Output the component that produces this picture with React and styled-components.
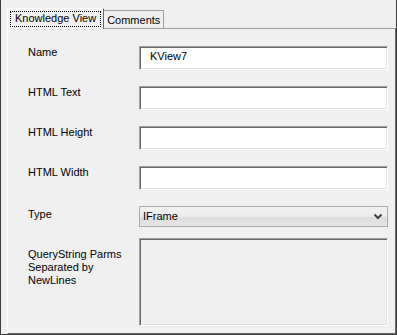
import React from "react";
import styled, { createGlobalStyle } from "styled-components";

const Global = createGlobalStyle`
  html, body { margin: 0; padding: 0; background: #f0f0f0; }
  * { box-sizing: border-box; }
  body { font-family: "Liberation Sans", Arial, sans-serif; font-size: 11px; color: #000; }
`;

const Window = styled.div`
  width: 397px;
  height: 335px;
  background: #f0f0f0;
  border-left: 1px solid #3c3c3c;
  border-right: 1px solid #3c3c3c;
  border-bottom: 1px solid #3c3c3c;
  display: flex;
  flex-direction: column;
`;

const TabStrip = styled.div`
  height: 28px;
  padding-left: 6px;
  display: flex;
  align-items: flex-end;
  flex-shrink: 0;
`;

const Tab = styled.div`
  position: relative;
  z-index: ${(p) => (p.$active ? 2 : 1)};
  background: #f0f0f0;
  line-height: 13px;
  white-space: nowrap;
  ${(p) =>
    p.$active
      ? `
    height: 21px;
    margin-bottom: -1px;
    padding: 2px 2px 0 2px;
    border-left: 1px solid #ffffff;
    border-top: 1px solid #ffffff;
    border-right: 1px solid #696969;
  `
      : `
    height: 18px;
    padding: 3px 3px 0 3px;
    border: 1px solid #a0a0a0;
    border-bottom: none;
    border-left: none;
  `}
`;

const Focus = styled.span`
  display: block;
  height: 16px;
  padding: 0 4px;
  border: 1px dotted #000;
  line-height: 13px;
`;

const Panel = styled.div`
  flex: 1;
  margin-left: 6px;
  border-left: 1px solid #ffffff;
  border-top: 1px solid #a0a0a0;
  border-right: 1px solid #696969;
  border-bottom: 1px solid #696969;
`;

const Form = styled.div`
  padding: 17px 0 0 20px;
  display: flex;
  flex-direction: column;
`;

const Row = styled.div`
  display: grid;
  grid-template-columns: 111px 249px;
  margin-top: ${(p) => p.$gap || 0}px;
`;

const Label = styled.div`
  padding-top: ${(p) => p.$offset || 0}px;
  line-height: 13px;
`;

const TextBox = styled.input`
  display: block;
  width: 249px;
  height: 24px;
  margin: 0;
  padding: 0 0 4px 10px;
  font: inherit;
  font-size: 11px;
  color: #000;
  background: #ffffff;
  border: 1px solid;
  border-color: #a0a0a0 #ffffff #ffffff #a0a0a0;
  box-shadow: inset 1px 1px 0 #696969, inset -1px -1px 0 #e3e3e3;
  outline: none;
`;

const Combo = styled.div`
  position: relative;
  width: 249px;
  height: 21px;
  padding-left: 3px;
  display: flex;
  align-items: center;
  line-height: 13px;
  border: 1px solid #acacac;
  background: linear-gradient(#f2f2f2 0%, #ebebeb 50%, #dddddd 51%, #e5e5e5 100%);
`;

const Arrow = styled.svg`
  position: absolute;
  right: 5px;
  top: 7px;
`;

const Memo = styled.div`
  width: 249px;
  height: 88px;
  background: #f0f0f0;
  border: 1px solid;
  border-color: #a0a0a0 #ffffff #ffffff #a0a0a0;
  box-shadow: inset 1px 1px 0 #696969, inset -1px -1px 0 #e3e3e3;
`;

export default function App() {
  return (
    <>
      <Global />
      <Window>
        <TabStrip>
          <Tab $active>
            <Focus>Knowledge View</Focus>
          </Tab>
          <Tab>Comments</Tab>
        </TabStrip>
        <Panel>
          <Form>
            <Row>
              <Label>Name</Label>
              <TextBox defaultValue="KView7" />
            </Row>
            <Row $gap={16}>
              <Label>HTML Text</Label>
              <TextBox defaultValue="" />
            </Row>
            <Row $gap={16}>
              <Label>HTML Height</Label>
              <TextBox defaultValue="" />
            </Row>
            <Row $gap={16}>
              <Label>HTML Width</Label>
              <TextBox defaultValue="" />
            </Row>
            <Row $gap={16}>
              <Label $offset={2}>Type</Label>
              <Combo>
                IFrame
                <Arrow width="8" height="6" viewBox="0 0 8 6">
                  <path d="M0.5 0.5 L4 4 L7.5 0.5" fill="none" stroke="#404040" strokeWidth="2" />
                </Arrow>
              </Combo>
            </Row>
            <Row $gap={11}>
              <Label $offset={10}>
                QueryString Parms
                <br />
                Separated by
                <br />
                NewLines
              </Label>
              <Memo />
            </Row>
          </Form>
        </Panel>
      </Window>
    </>
  );
}
